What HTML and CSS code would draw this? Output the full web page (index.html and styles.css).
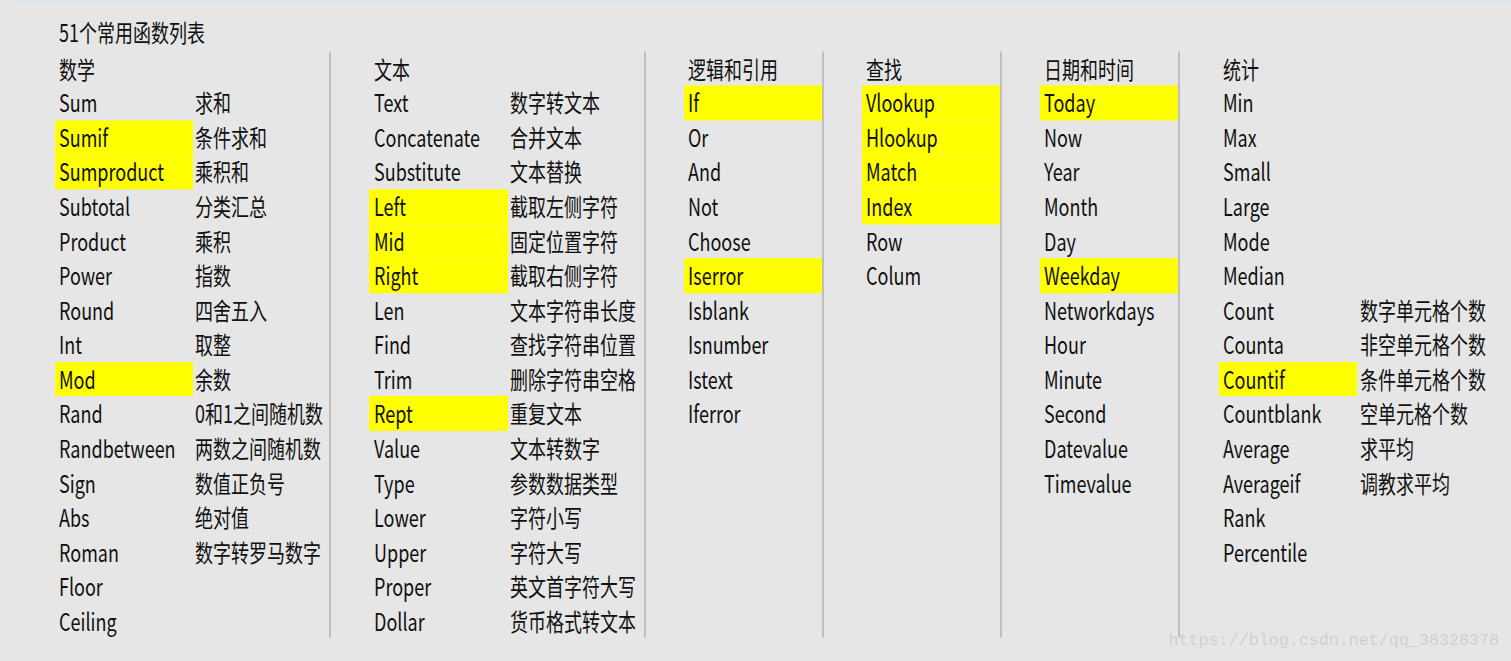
FILE: index.html
```html
<!DOCTYPE html>
<html lang="zh-CN">
<head>
<meta charset="utf-8">
<title>51个常用函数列表</title>
<link rel="stylesheet" href="styles.css">
</head>
<body>
<div class="topbar"></div>
<div class="sheet">
  <div class="title">51个常用函数列表</div>
  <div class="table">
    <div class="group g-wide">
      <div class="row head"><div class="name">数学</div></div>
      <div class="row"><div class="name">Sum</div><div class="desc">求和</div></div>
      <div class="row"><div class="name hl">Sumif</div><div class="desc">条件求和</div></div>
      <div class="row"><div class="name hl">Sumproduct</div><div class="desc">乘积和</div></div>
      <div class="row"><div class="name">Subtotal</div><div class="desc">分类汇总</div></div>
      <div class="row"><div class="name">Product</div><div class="desc">乘积</div></div>
      <div class="row"><div class="name">Power</div><div class="desc">指数</div></div>
      <div class="row"><div class="name">Round</div><div class="desc">四舍五入</div></div>
      <div class="row"><div class="name">Int</div><div class="desc">取整</div></div>
      <div class="row"><div class="name hl">Mod</div><div class="desc">余数</div></div>
      <div class="row"><div class="name">Rand</div><div class="desc">0和1之间随机数</div></div>
      <div class="row"><div class="name">Randbetween</div><div class="desc">两数之间随机数</div></div>
      <div class="row"><div class="name">Sign</div><div class="desc">数值正负号</div></div>
      <div class="row"><div class="name">Abs</div><div class="desc">绝对值</div></div>
      <div class="row"><div class="name">Roman</div><div class="desc">数字转罗马数字</div></div>
      <div class="row"><div class="name">Floor</div><div class="desc"></div></div>
      <div class="row"><div class="name">Ceiling</div><div class="desc"></div></div>
    </div>
    <div class="group g-text">
      <div class="row head"><div class="name">文本</div></div>
      <div class="row"><div class="name">Text</div><div class="desc">数字转文本</div></div>
      <div class="row"><div class="name">Concatenate</div><div class="desc">合并文本</div></div>
      <div class="row"><div class="name">Substitute</div><div class="desc">文本替换</div></div>
      <div class="row"><div class="name hl">Left</div><div class="desc">截取左侧字符</div></div>
      <div class="row"><div class="name hl">Mid</div><div class="desc">固定位置字符</div></div>
      <div class="row"><div class="name hl">Right</div><div class="desc">截取右侧字符</div></div>
      <div class="row"><div class="name">Len</div><div class="desc">文本字符串长度</div></div>
      <div class="row"><div class="name">Find</div><div class="desc">查找字符串位置</div></div>
      <div class="row"><div class="name">Trim</div><div class="desc">删除字符串空格</div></div>
      <div class="row"><div class="name hl">Rept</div><div class="desc">重复文本</div></div>
      <div class="row"><div class="name">Value</div><div class="desc">文本转数字</div></div>
      <div class="row"><div class="name">Type</div><div class="desc">参数数据类型</div></div>
      <div class="row"><div class="name">Lower</div><div class="desc">字符小写</div></div>
      <div class="row"><div class="name">Upper</div><div class="desc">字符大写</div></div>
      <div class="row"><div class="name">Proper</div><div class="desc">英文首字符大写</div></div>
      <div class="row"><div class="name">Dollar</div><div class="desc">货币格式转文本</div></div>
    </div>
    <div class="group g-narrow">
      <div class="row head"><div class="name">逻辑和引用</div></div>
      <div class="row"><div class="name hl">If</div></div>
      <div class="row"><div class="name">Or</div></div>
      <div class="row"><div class="name">And</div></div>
      <div class="row"><div class="name">Not</div></div>
      <div class="row"><div class="name">Choose</div></div>
      <div class="row"><div class="name hl">Iserror</div></div>
      <div class="row"><div class="name">Isblank</div></div>
      <div class="row"><div class="name">Isnumber</div></div>
      <div class="row"><div class="name">Istext</div></div>
      <div class="row"><div class="name">Iferror</div></div>
    </div>
    <div class="group g-narrow">
      <div class="row head"><div class="name">查找</div></div>
      <div class="row"><div class="name hl">Vlookup</div></div>
      <div class="row"><div class="name hl">Hlookup</div></div>
      <div class="row"><div class="name hl">Match</div></div>
      <div class="row"><div class="name hl">Index</div></div>
      <div class="row"><div class="name">Row</div></div>
      <div class="row"><div class="name">Colum</div></div>
    </div>
    <div class="group g-narrow">
      <div class="row head"><div class="name">日期和时间</div></div>
      <div class="row"><div class="name hl">Today</div></div>
      <div class="row"><div class="name">Now</div></div>
      <div class="row"><div class="name">Year</div></div>
      <div class="row"><div class="name">Month</div></div>
      <div class="row"><div class="name">Day</div></div>
      <div class="row"><div class="name hl">Weekday</div></div>
      <div class="row"><div class="name">Networkdays</div></div>
      <div class="row"><div class="name">Hour</div></div>
      <div class="row"><div class="name">Minute</div></div>
      <div class="row"><div class="name">Second</div></div>
      <div class="row"><div class="name">Datevalue</div></div>
      <div class="row"><div class="name">Timevalue</div></div>
    </div>
    <div class="group g-stat">
      <div class="row head"><div class="name">统计</div></div>
      <div class="row"><div class="name">Min</div></div>
      <div class="row"><div class="name">Max</div></div>
      <div class="row"><div class="name">Small</div></div>
      <div class="row"><div class="name">Large</div></div>
      <div class="row"><div class="name">Mode</div></div>
      <div class="row"><div class="name">Median</div></div>
      <div class="row"><div class="name">Count</div><div class="desc">数字单元格个数</div></div>
      <div class="row"><div class="name">Counta</div><div class="desc">非空单元格个数</div></div>
      <div class="row"><div class="name hl">Countif</div><div class="desc">条件单元格个数</div></div>
      <div class="row"><div class="name">Countblank</div><div class="desc">空单元格个数</div></div>
      <div class="row"><div class="name">Average</div><div class="desc">求平均</div></div>
      <div class="row"><div class="name">Averageif</div><div class="desc">调教求平均</div></div>
      <div class="row"><div class="name">Rank</div></div>
      <div class="row"><div class="name">Percentile</div></div>
    </div>
  </div>
</div>
<div class="watermark">https://blog.csdn.net/qq_38328378</div>
</body>
</html>
```
FILE: styles.css
```css
html, body {
  margin: 0;
  padding: 0;
}
body {
  background: #e6e6e6;
  color: #111;
  font-family: "Noto Sans CJK SC", "Noto Sans", sans-serif;
  font-size: 18px;
  width: 1511px;
  height: 661px;
  overflow: hidden;
  position: relative;
}
.topbar {
  height: 3px;
  margin-left: 14px;
  background: #dde6ee;
}
.sheet {
  padding: 9.4px 0 0 55px;
  transform: scaleY(1.35);
  transform-origin: top left;
}
.title {
  height: 25.58px;
  line-height: 25.58px;
  padding-left: 4px;
  margin-bottom: 0.7px;
}
.table {
  display: flex;
  align-items: stretch;
}
.group {
  display: flex;
  flex-direction: column;
}
.group + .group {
  border-left: 2px solid #bfbfbf;
  padding-left: 38px;
}
.g-wide { width: 274px; }
.g-text { width: 275px; }
.g-narrow { width: 138px; }
.g-stat { width: 276px; padding-left: 39px !important; }
.row {
  display: flex;
  height: 25.58px;
  line-height: 25.58px;
  white-space: nowrap;
}
.name {
  width: 138px;
  flex: none;
  padding-left: 4px;
  box-sizing: border-box;
}
.g-text .name { width: 139px; padding-left: 5px; }
.desc {
  flex: 1;
  padding-left: 2px;
}
.g-stat .desc { padding-left: 3px; }
.hl { background: #ffff00; }
.watermark {
  position: absolute;
  right: 12px;
  bottom: 11px;
  font-family: "Liberation Mono", monospace;
  font-size: 16.7px;
  color: #d2cfca;
}
```
